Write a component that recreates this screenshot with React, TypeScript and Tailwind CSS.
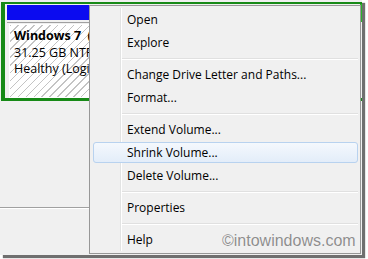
const ITEMS: (string | null)[] = [
  "Open",
  "Explore",
  null,
  "Change Drive Letter and Paths...",
  "Format...",
  null,
  "Extend Volume...",
  "Shrink Volume...",
  "Delete Volume...",
  null,
  "Properties",
  null,
  "Help",
];

const ACTIVE = "Shrink Volume...";

function ContextMenu() {
  return (
    <div className="absolute left-[89px] top-[5px] z-10 h-[249px] w-[272px] border border-[#979797] bg-[#f0f0f0] py-[2px]">
      <div className="absolute left-[30px] top-[2px] bottom-[2px] w-[2px] border-l border-[#e2e3e3] bg-white" />
      {ITEMS.map((item, i) =>
        item === null ? (
          <div key={i} className="relative flex h-[9px] items-center pl-[32px] pr-[2px]">
            <div className="h-[2px] w-full border-t border-[#e0e0e0] bg-white" />
          </div>
        ) : (
          <div key={i} className="relative z-10 h-[23px] py-[1px] pl-[3px] pr-[2px]">
            <div
              className={
                item === ACTIVE
                  ? "flex h-full items-center rounded-[3px] border border-[#b8d2ef] bg-[linear-gradient(#f4f8fd,#e3edf9)] pl-[33px]"
                  : "flex h-full items-center border border-transparent pl-[33px]"
              }
            >
              <span className="text-[12px] leading-none text-black">{item}</span>
            </div>
          </div>
        )
      )}
    </div>
  );
}

export default function App() {
  return (
    <div className="relative h-[259px] w-[368px] overflow-hidden bg-white font-['Open_Sans',sans-serif]">
      <div className="relative h-[255px] w-[362px] bg-[#f0f0f0] shadow-[3px_3px_1px_#6f6f6f]">
        <div className="pl-[1px] pt-[2px]">
          <div className="flex h-[99px] border-b-[3px] border-l-4 border-t-2 border-[#178a17]">
            <div className="flex w-[118px] flex-col overflow-hidden pl-[2px] pt-[1px]">
              <div className="h-[15px] bg-[#0b0bf0]" />
              <div className="mt-[2px] h-[1px] bg-[#a0a0a0]" />
              <div className="ml-[2px] mt-[1px] flex-1 overflow-hidden border border-white bg-[image:repeating-linear-gradient(135deg,#c4c4c4_0px,#c4c4c4_1px,#ffffff_1px,#ffffff_5.6px)] pl-[4px] pt-[3px] text-[12.5px] leading-[16.5px] text-black">
                <div className="whitespace-nowrap font-bold">Windows 7&nbsp; (C:)</div>
                <div className="whitespace-nowrap">31.25 GB NTFS</div>
                <div className="whitespace-nowrap">Healthy (Logical Drive)</div>
              </div>
            </div>
            <div className="flex-1" />
            <div className="w-[2px]">
              <div className="h-[18px] bg-[#2cb52c]" />
            </div>
          </div>
        </div>
        <div className="mt-[106px] h-[2px] w-[90px] border-t border-[#a0a0a0] bg-white" />
        <ContextMenu />
        <div className="absolute left-[222px] top-[233px] z-20 font-['Liberation_Sans',sans-serif] text-[16px] leading-none text-[#8e8e8e] [text-shadow:0_0_1px_#ffffff]">
          ©intowindows.com
        </div>
      </div>
    </div>
  );
}
